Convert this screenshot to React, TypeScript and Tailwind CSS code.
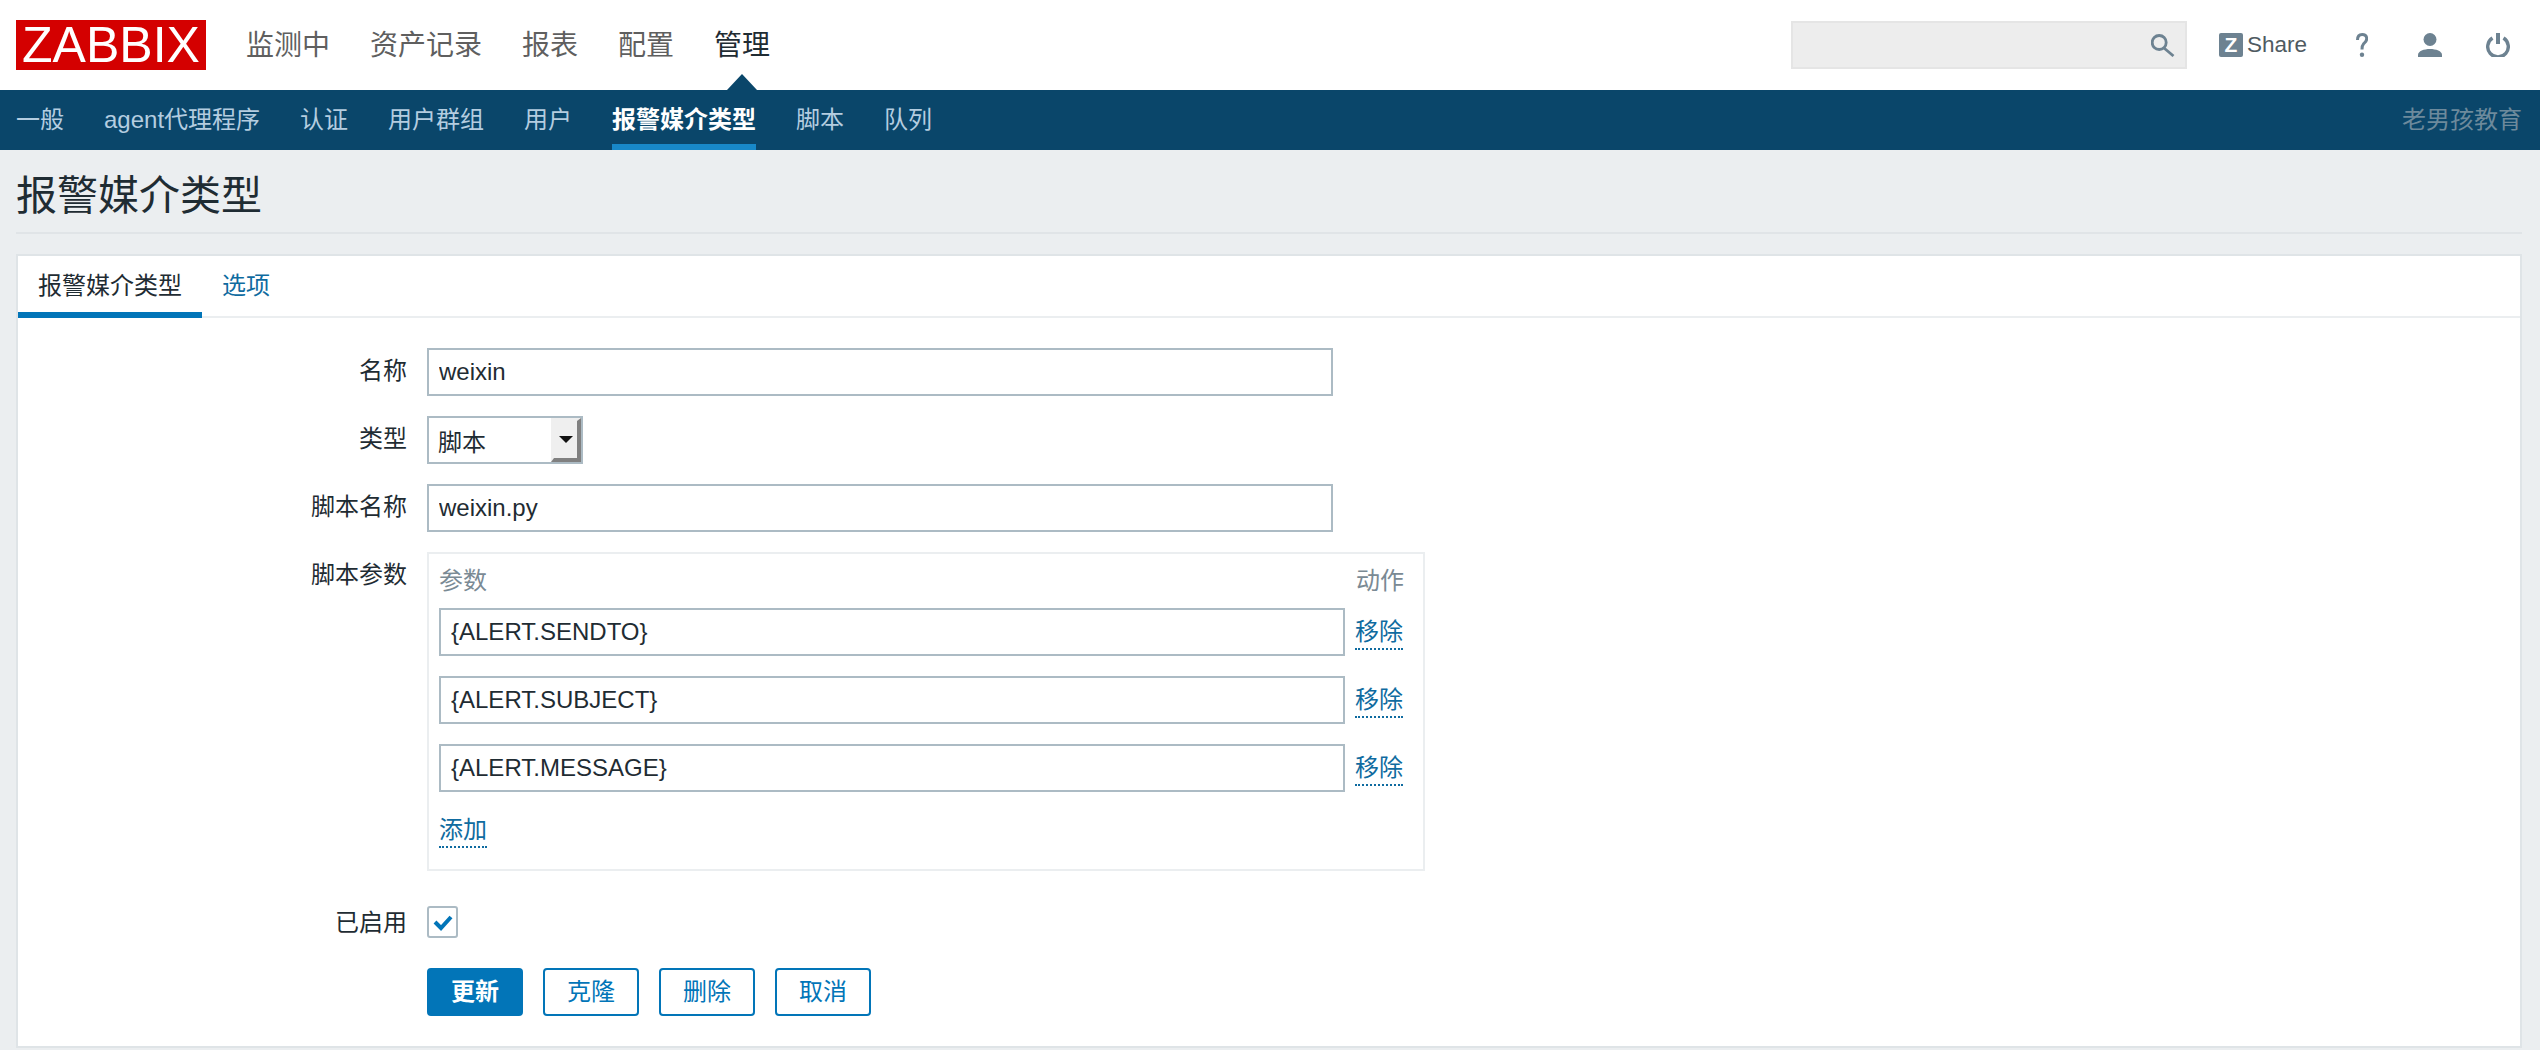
import React from 'react';

const TOP_NAV = ['监测中', '资产记录', '报表', '配置', '管理'];
const SUB_NAV = ['一般', 'agent代理程序', '认证', '用户群组', '用户', '报警媒介类型', '脚本', '队列'];
const PARAMS = ['{ALERT.SENDTO}', '{ALERT.SUBJECT}', '{ALERT.MESSAGE}'];

function TextInput({ value, width }: { value: string; width: string }) {
  return (
    <input
      readOnly
      value={value}
      className={`${width} h-[48px] border-2 border-[#acbbc4] bg-white px-[10px] text-[24px] text-[#1f2c33] outline-none`}
    />
  );
}

function FormRow({ label, children, className = '' }: { label: string; children: React.ReactNode; className?: string }) {
  return (
    <div className={`flex gap-[20px] ${className}`}>
      <div className="w-[389px] shrink-0 pt-[9px] text-right text-[24px] leading-[28px] text-[#1f2c33]">{label}</div>
      {children}
    </div>
  );
}

function Button({ label, primary }: { label: string; primary?: boolean }) {
  return (
    <button
      className={`h-[48px] w-[96px] rounded-[4px] border-2 border-[#0275b8] text-[24px] ${
        primary ? 'bg-[#0275b8] font-bold text-white' : 'bg-white text-[#0275b8]'
      }`}
    >
      {label}
    </button>
  );
}

function DottedLink({ label }: { label: string }) {
  return (
    <span className="mt-[3px] inline-block border-b-2 border-dotted border-[#0f6ba0] pb-[1px] text-[24px] leading-[30px] text-[#0f6ba0]">
      {label}
    </span>
  );
}

export default function App() {
  return (
    <div className="h-[1050px] w-[2540px] overflow-hidden bg-[#ebeef0] font-['Liberation_Sans','Noto_Sans_CJK_SC',sans-serif]">
      {/* top header */}
      <header className="flex h-[90px] items-center bg-white pl-[16px] pr-[30px]">
        <div className="flex h-[50px] w-[190px] items-center justify-center bg-[#d40000] text-[50px] leading-[50px] text-white">
          ZABBIX
        </div>
        <nav className="ml-[40px] flex gap-[40px] pt-[2px] text-[28px] leading-[40px]">
          {TOP_NAV.map((item) => (
            <span key={item} className={item === '管理' ? 'relative text-[#1f2c33]' : 'text-[#5f5f5f]'}>
              {item}
              {item === '管理' && (
                <span className="absolute left-1/2 top-[48px] h-0 w-0 -translate-x-1/2 border-x-[15px] border-b-[16px] border-x-transparent border-b-[#0a466a]" />
              )}
            </span>
          ))}
        </nav>
        <div className="ml-auto flex items-center">
          <div className="flex h-[48px] w-[396px] items-center justify-end border-2 border-[#e5e5e5] bg-[#ededed] pr-[10px]">
            <svg width="24" height="23" viewBox="0 0 24 23" fill="none" stroke="#6d8291" strokeWidth="2.8">
              <circle cx="8.2" cy="8.5" r="7" />
              <path d="M13 14 L22.5 22" />
            </svg>
          </div>
          <div className="ml-[32px] flex h-[24px] w-[24px] items-center justify-center rounded-[2px] bg-[#6d8291] text-[21px] font-bold leading-[24px] text-white">
            Z
          </div>
          <span className="ml-[4px] w-[59px] whitespace-nowrap text-[22.5px] text-[#4f5a61]">Share</span>
          <svg className="ml-[50px]" width="12" height="24" viewBox="0 0 12 24" fill="none" stroke="#6d8291" strokeWidth="3">
            <path d="M1.5 7 C1.5 3 3.5 1.5 6.2 1.5 C9 1.5 10.7 3.3 10.7 5.8 C10.7 8.3 8.8 9.5 7.6 10.8 C6.6 11.9 6 13.2 6 16.5" />
            <circle cx="6" cy="21.8" r="2.2" fill="#6d8291" stroke="none" />
          </svg>
          <svg className="ml-[50px]" width="24" height="24" viewBox="0 0 24 24" fill="#6d8291">
            <circle cx="12" cy="6.5" r="6.5" />
            <path d="M0 24 V22 C0 18 6 16 12 16 C18 16 24 18 24 22 V24 Z" />
          </svg>
          <svg className="ml-[44px]" width="24" height="24" viewBox="0 0 24 24" fill="none" stroke="#6d8291" strokeWidth="3.4">
            <path d="M6.5 5 A10.3 10.3 0 1 0 17.5 5" />
            <path d="M12 0 V11" strokeWidth="4" />
          </svg>
        </div>
      </header>

      {/* sub navigation */}
      <div className="flex h-[60px] items-stretch bg-[#0a466a] pl-[16px] pr-[18px]">
        <nav className="flex gap-[40px] text-[24px]">
          {SUB_NAV.map((item) => (
            <span
              key={item}
              className={`flex items-center border-b-[6px] pt-[6px] ${
                item === '报警媒介类型' ? 'border-[#1888c8] font-bold text-white' : 'border-transparent text-[#b4cde0]'
              }`}
            >
              {item}
            </span>
          ))}
        </nav>
        <span className="ml-auto flex items-center text-[24px] text-[#6d8a9c]">老男孩教育</span>
      </div>

      <main className="pl-[16px] pr-[18px]">
        <div className="flex h-[84px] items-center border-b-2 border-[#e0e4e7] pt-[10px] text-[41px] leading-[48px] text-[#1f2c33]">
          报警媒介类型
        </div>

        {/* form panel */}
        <div className="mt-[20px] h-[794px] border-2 border-[#dfe4e7] bg-white">
          <div className="flex h-[62px] border-b-2 border-[#ebeef0] text-[24px]">
            <span className="-mb-[2px] flex w-[184px] items-center justify-center border-b-[6px] border-[#0275b8] pt-[4px] text-[#1f2c33]">
              报警媒介类型
            </span>
            <span className="ml-[20px] flex items-center text-[#0f6ba0]">选项</span>
          </div>

          <div className="flex flex-col pt-[30px]">
            <FormRow label="名称">
              <TextInput value="weixin" width="w-[906px]" />
            </FormRow>
            <FormRow label="类型" className="mt-[20px]">
              <div className="flex h-[48px] w-[156px] items-stretch border-2 border-[#acbbc4] bg-white text-[24px] text-[#1f2c33]">
                <span className="flex-1 pl-[9px] pt-[11px] leading-[28px]">脚本</span>
                <span className="flex w-[30px] items-center justify-center border-[3px] border-b-[4px] border-r-[4px] border-b-[#808080] border-l-[#efefef] border-r-[#808080] border-t-[#efefef] bg-[#efefef]">
                  <span className="h-0 w-0 border-x-[7px] border-t-[7px] border-x-transparent border-t-[#111111]" />
                </span>
              </div>
            </FormRow>
            <FormRow label="脚本名称" className="mt-[20px]">
              <TextInput value="weixin.py" width="w-[906px]" />
            </FormRow>
            <FormRow label="脚本参数" className="mt-[20px]">
              <div className="h-[319px] w-[998px] border-2 border-[#ebeef0] px-[10px]">
                <div className="flex h-[54px] items-center justify-between pr-[9px] text-[24px] text-[#7a8a94]">
                  <span>参数</span>
                  <span>动作</span>
                </div>
                <div className="flex flex-col gap-[20px]">
                  {PARAMS.map((p) => (
                    <div key={p} className="flex items-center gap-[10px]">
                      <TextInput value={p} width="w-[906px]" />
                      <DottedLink label="移除" />
                    </div>
                  ))}
                </div>
                <div className="mt-[20px]">
                  <DottedLink label="添加" />
                </div>
              </div>
            </FormRow>
            <div className="mt-[35px] flex items-center gap-[20px]">
              <div className="w-[389px] shrink-0 pt-[2px] text-right text-[24px] leading-[28px] text-[#1f2c33]">已启用</div>
              <div className="flex h-[32px] w-[31px] items-center justify-center rounded-[3px] border-2 border-[#acbbc4] pt-[1px]">
                <svg width="20" height="16" viewBox="0 0 20 16" fill="none" stroke="#0275b8" strokeWidth="4">
                  <path d="M2 7 L8 13 L18 2" />
                </svg>
              </div>
            </div>
            <div className="ml-[409px] mt-[30px] flex gap-[20px]">
              <Button label="更新" primary />
              <Button label="克隆" />
              <Button label="删除" />
              <Button label="取消" />
            </div>
          </div>
        </div>
      </main>
    </div>
  );
}
